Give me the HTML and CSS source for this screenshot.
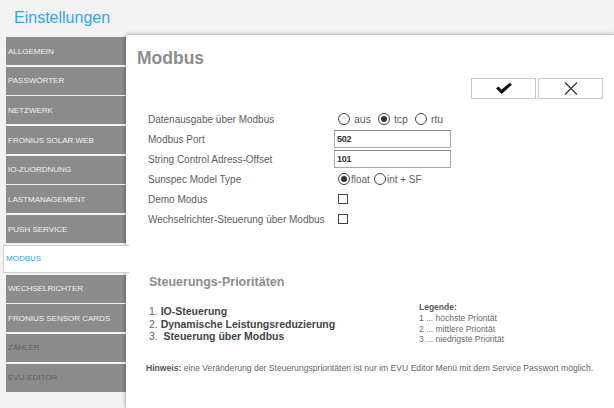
FILE: index.html
```html
<!DOCTYPE html>
<html lang="de">
<head>
<meta charset="utf-8">
<title>Einstellungen</title>
<link rel="stylesheet" href="styles.css">
</head>
<body>
<header class="header"><h1 class="title">Einstellungen</h1></header>
<div class="main">
  <nav class="sidebar">
    <div class="nav-item">Allgemein</div>
    <div class="nav-item">Passwörter</div>
    <div class="nav-item">Netzwerk</div>
    <div class="nav-item">Fronius Solar.web</div>
    <div class="nav-item">IO-Zuordnung</div>
    <div class="nav-item">Lastmanagement</div>
    <div class="nav-item">Push Service</div>
    <div class="nav-item active">Modbus</div>
    <div class="nav-item">Wechselrichter</div>
    <div class="nav-item">Fronius Sensor Cards</div>
    <div class="nav-item dim">Zähler</div>
    <div class="nav-item dim">EVU-Editor</div>
  </nav>
  <section class="panel">
    <h2 class="heading">Modbus</h2>
    <div class="actions">
      <button class="btn" type="button" aria-label="Speichern">
        <svg width="18" height="13" viewBox="0 0 18 13"><path d="M1 6.4 L3.3 4.4 L6.6 7.6 L14.8 0.8 L17 2.8 L6.6 12 Z" fill="#111"/></svg>
      </button>
      <button class="btn" type="button" aria-label="Abbrechen">
        <svg width="14" height="13" viewBox="0 0 14 13"><path d="M1 0.5 L13 12.5 M13 0.5 L1 12.5" stroke="#333" stroke-width="1.2" fill="none"/></svg>
      </button>
    </div>
    <div class="form">
      <div class="label">Datenausgabe über Modbus</div>
      <div class="value">
        <span class="radio"></span><span class="opt">aus</span>
        <span class="radio checked"></span><span class="opt">tcp</span>
        <span class="radio"></span><span class="opt">rtu</span>
      </div>
      <div class="label">Modbus Port</div>
      <div class="value"><div class="field">502</div></div>
      <div class="label">String Control Adress-Offset</div>
      <div class="value"><div class="field">101</div></div>
      <div class="label">Sunspec Model Type</div>
      <div class="value">
        <span class="radio checked"></span><span class="opt tight">float</span>
        <span class="radio"></span><span class="opt tight">int + SF</span>
      </div>
      <div class="label">Demo Modus</div>
      <div class="value"><span class="check"></span></div>
      <div class="label">Wechselrichter-Steuerung über Modbus</div>
      <div class="value"><span class="check"></span></div>
    </div>
    <h3 class="subheading">Steuerungs-Prioritäten</h3>
    <div class="priorities">
      <ol class="prio-list">
        <li><span class="num">1.</span> <b>IO-Steuerung</b></li>
        <li><span class="num">2.</span> <b>Dynamische Leistungsreduzierung</b></li>
        <li><span class="num">3.</span>&nbsp; <b>Steuerung über Modbus</b></li>
      </ol>
      <div class="legend">
        <div class="legend-title">Legende:</div>
        <div>1 ... höchste Priorität</div>
        <div>2 ... mittlere Priorität</div>
        <div>3 ... niedrigste Priorität</div>
      </div>
    </div>
    <p class="note"><b>Hinweis:</b> eine Veränderung der Steuerungsprioritäten ist nur im EVU Editor Menü mit dem Service Passwort möglich.</p>
  </section>
</div>
</body>
</html>
```
FILE: styles.css
```css
* { box-sizing: border-box; }
html, body { margin: 0; padding: 0; }
body {
  width: 614px;
  height: 408px;
  overflow: hidden;
  background: #f3f3f3;
  font-family: "Liberation Sans", Arial, sans-serif;
  color: #555;
}
.header {
  height: 35px;
  padding: 9px 0 0 14px;
}
.title {
  margin: 0;
  font-size: 16px;
  line-height: 18px;
  font-weight: normal;
  color: #2aa9f0;
}
.main {
  display: flex;
  height: 373px;
}
.sidebar {
  width: 126px;
  flex: none;
  padding: 2px 0 0 6px;
  display: flex;
  flex-direction: column;
  gap: 1.7px;
}
.nav-item {
  height: 28px;
  background: #8b8b8b;
  color: #f2f2f2;
  font-size: 8px;
  text-transform: uppercase;
  display: flex;
  align-items: center;
  padding-left: 2px;
  white-space: nowrap;
}
.nav-item.dim { color: #5e5e5e; }
.nav-item.active {
  background: #fff;
  color: #2aa9f0;
  margin-left: -3px;
  margin-right: -3px;
  border: 1px solid #cfcfcf;
  border-right: none;
  padding-left: 2px;
  position: relative;
  z-index: 2;
}
.panel {
  flex: 1;
  background: #fff;
  box-shadow: 0 0 4px rgba(0, 0, 0, 0.45);
  padding: 13px 11px 0 11px;
  position: relative;
  z-index: 1;
}
.heading {
  margin: 0;
  font-size: 17.5px;
  line-height: 20px;
  font-weight: bold;
  color: #8c8c8c;
}
.actions {
  display: flex;
  justify-content: flex-end;
  gap: 2px;
  margin-top: 10px;
}
.btn {
  width: 65px;
  height: 21px;
  background: #fff;
  border: 1px solid #c9c9c9;
  padding: 0;
  display: flex;
  align-items: center;
  justify-content: center;
}
.form {
  margin-top: 10px;
  padding-left: 11px;
  display: grid;
  grid-template-columns: 186px auto;
  grid-auto-rows: 20px;
  font-size: 10px;
}
.label {
  display: flex;
  align-items: center;
  color: #5e5e5e;
  white-space: nowrap;
}
.value {
  display: flex;
  align-items: center;
  padding-left: 4px;
}
.radio {
  width: 12px;
  height: 12px;
  border: 1px solid #444;
  border-radius: 50%;
  flex: none;
  display: flex;
  align-items: center;
  justify-content: center;
  margin-right: 4px;
}
.radio.checked::after {
  content: "";
  width: 6px;
  height: 6px;
  border-radius: 50%;
  background: #333;
}
.opt {
  font-size: 10.5px;
  color: #5e5e5e;
  margin-right: 7px;
}
.opt.tight { font-size: 10px; margin-left: -3px; margin-right: 4px; }
.field {
  width: 117px;
  height: 18px;
  margin-left: -4px;
  border: 1px solid #a8a8a8;
  border-top-color: #8a8a8a;
  display: flex;
  align-items: center;
  padding-left: 2px;
  font-size: 9px;
  font-weight: bold;
  letter-spacing: -0.3px;
  color: #333;
}
.check {
  width: 10px;
  height: 10px;
  border: 1px solid #444;
  background: #fff;
}
.subheading {
  margin: 46px 0 0 0;
  padding-left: 12px;
  font-size: 12.5px;
  line-height: 15px;
  font-weight: bold;
  color: #8c8c8c;
}
.priorities {
  display: flex;
  align-items: flex-start;
  padding-left: 11px;
  margin-top: 12px;
}
.prio-list {
  list-style: none;
  margin: 3px 0 0 0;
  padding: 0 0 0 1px;
  width: 271px;
  font-size: 10.5px;
  line-height: 12.5px;
}
.prio-list .num { color: #666; }
.prio-list b { color: #444; }
.legend {
  font-size: 8.5px;
  line-height: 10.8px;
  color: #6a6a6a;
}
.legend-title { font-weight: bold; color: #5a5a5a; }
.note {
  margin: 18px 0 0 0;
  padding-left: 9px;
  font-size: 8.6px;
  line-height: 10px;
  color: #666;
  white-space: nowrap;
}
.note b { color: #555; }
```
